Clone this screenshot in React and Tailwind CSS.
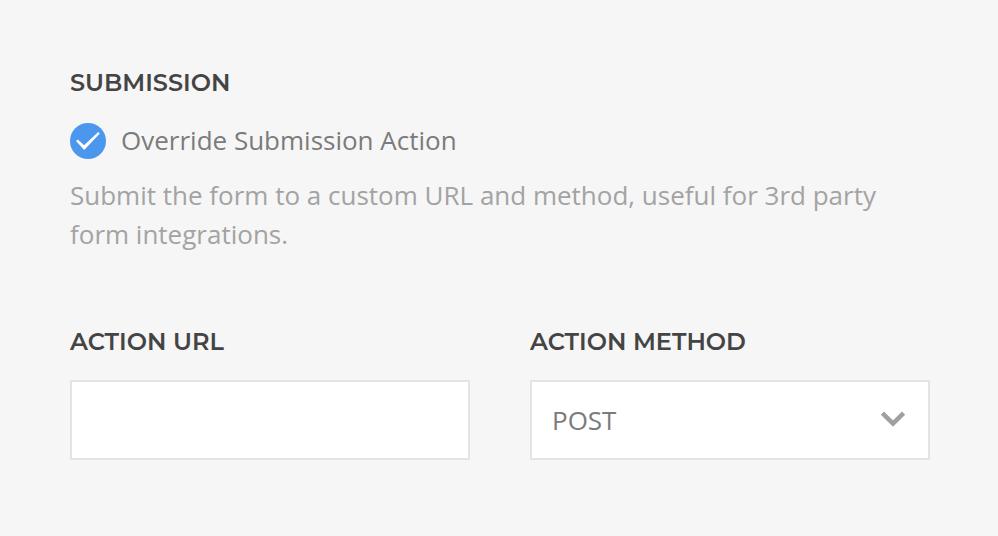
function Label({ children }) {
  return (
    <h2 className="h-[30px] whitespace-nowrap font-['Montserrat','Inter',sans-serif] text-[24px] leading-8 font-semibold text-[#444]">
      {children}
    </h2>
  );
}

export default function App() {
  return (
    <main className="h-[536px] w-[998px] bg-[#f6f6f6] px-[70px] pt-[67px] font-['Open_Sans',sans-serif] text-[26px] text-[#7b7b7b]">
      <Label>SUBMISSION</Label>
      <label className="mt-[24px] flex h-10 items-center gap-[15px]">
        <span className="flex size-9 items-center justify-center rounded-full bg-[#4c97ee]">
          <svg width="36" height="36" viewBox="0 0 36 36" fill="white">
            <path d="M6 18 7.8 16.4 14.1 22.2 28.2 8.9 29.8 10.5 14.2 27Z" />
          </svg>
        </span>
        <span className="pb-0.5">Override Submission Action</span>
      </label>
      <p className="mt-[15px] leading-[39px] text-[#a3a3a3]">Submit the form to a custom URL and method, useful for 3rd party<br />form integrations.</p>
      <div className="mt-[72px] grid grid-cols-[400px_400px] gap-[60px]">
        <div>
          <Label>ACTION URL</Label>
          <input aria-label="Action URL" className="mt-[24px] block h-20 w-full border-2 border-[#e4e4e4] bg-white px-5" />
        </div>
        <div>
          <Label>ACTION METHOD</Label>
          <div className="mt-[24px] flex h-20 items-center justify-between border-2 border-[#e4e4e4] bg-white pr-[22px] pl-5">
            <span>POST</span>
            <svg width="26" height="18" viewBox="0 0 26 18" fill="none" stroke="#a0a0a0" strokeWidth="4.6"><path d="M2.4 2.2 13 12.6 23.6 2.2" /></svg>
          </div>
        </div>
      </div>
    </main>
  );
}
